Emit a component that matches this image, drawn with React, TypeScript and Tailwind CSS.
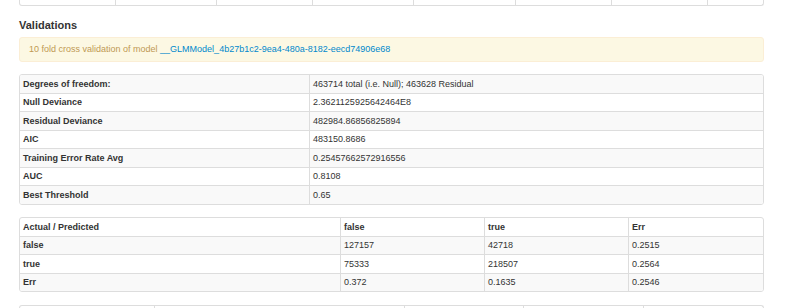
import React from 'react';

// Model validation summary (GLM cross validation)
const stats: [string, string][] = [
  ['Degrees of freedom:', '463714 total (i.e. Null); 463628 Residual'],
  ['Null Deviance', '2.3621125925642464E8'],
  ['Residual Deviance', '482984.86856825894'],
  ['AIC', '483150.8686'],
  ['Training Error Rate Avg', '0.25457662572916556'],
  ['AUC', '0.8108'],
  ['Best Threshold', '0.65'],
];

const confusion: string[][] = [
  ['false', '127157', '42718', '0.2515'],
  ['true', '75333', '218507', '0.2564'],
  ['Err', '0.372', '0.1635', '0.2546'],
];

const cell = 'px-[3px] py-[2.5px] leading-[12.5px] whitespace-nowrap overflow-hidden';

export default function App() {
  return (
    <div
      className="w-[800px] h-[308px] overflow-hidden bg-white text-[#333] text-[9px]"
      style={{ fontFamily: '"Liberation Sans", Arial, Helvetica, sans-serif' }}
    >
      <div className="ml-[19px] w-[745px]">
        {/* tail of the previous table */}
        <div className="grid grid-cols-[95px_101px_96px_101px_102px_96px_96px_1fr] border border-t-0 border-[#ddd] rounded-b-[3px]">
          {Array.from({ length: 8 }).map((_, i) => (
            <div key={i} className={`h-[5px] ${i > 0 ? 'border-l border-[#ddd]' : ''}`} />
          ))}
        </div>

        <h4 className="mt-[13px] mb-[5px] text-[11px] leading-[13px] font-bold">Validations</h4>

        <div className="bg-[#fcf8e3] border border-[#fbeed5] rounded-[3px] text-[#c09853] pl-[9px] py-[5px] leading-[13px]">
          10 fold cross validation of model{' '}
          <a className="text-[#0088cc]" href="#">
            __GLMModel_4b27b1c2-9ea4-480a-8182-eecd74906e68
          </a>
        </div>

        {/* summary stats */}
        <div className="mt-[12px] border border-[#ddd] rounded-[3px] overflow-hidden">
          {stats.map(([k, v], i) => (
            <div
              key={k}
              className={`grid grid-cols-[289px_1fr] ${i > 0 ? 'border-t border-[#ddd]' : ''} ${i % 2 === 0 ? 'bg-[#f9f9f9]' : ''}`}
            >
              <div className={`${cell} font-bold`}>{k}</div>
              <div className={`${cell} border-l border-[#ddd]`}>{v}</div>
            </div>
          ))}
        </div>

        {/* confusion matrix */}
        <div className="mt-[12.5px] border border-[#ddd] rounded-[3px] overflow-hidden">
          <div className="grid grid-cols-[320px_144px_144px_1fr] font-bold">
            {['Actual / Predicted', 'false', 'true', 'Err'].map((h, j) => (
              <div key={h} className={`${cell} ${j > 0 ? 'border-l border-[#ddd]' : ''}`}>
                {h}
              </div>
            ))}
          </div>
          {confusion.map((row, i) => (
            <div
              key={row[0]}
              className={`grid grid-cols-[320px_144px_144px_1fr] border-t border-[#ddd] ${i % 2 === 0 ? 'bg-[#f9f9f9]' : ''}`}
            >
              {row.map((c, j) => (
                <div key={j} className={`${cell} ${j === 0 ? 'font-bold' : 'border-l border-[#ddd]'}`}>
                  {c}
                </div>
              ))}
            </div>
          ))}
        </div>

        {/* next table, cut off */}
        <div className="mt-[12.5px] grid grid-cols-[134px_250px_119px_120px_1fr] border border-b-0 border-[#ddd] rounded-t-[3px]">
          {Array.from({ length: 5 }).map((_, i) => (
            <div key={i} className={`h-[18px] ${i > 0 ? 'border-l border-[#ddd]' : ''}`} />
          ))}
        </div>
      </div>
    </div>
  );
}
